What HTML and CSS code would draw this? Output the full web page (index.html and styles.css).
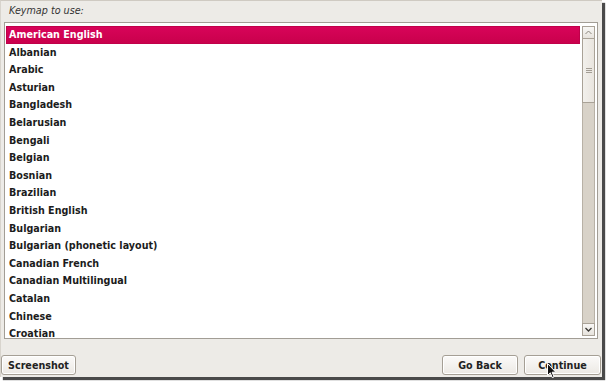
FILE: index.html
```html
<!DOCTYPE html>
<html>
<head>
<meta charset="utf-8">
<link rel="stylesheet" href="styles.css">
</head>
<body>
<div class="window">
  <div class="label">Keymap to use:</div>
  <div class="listbox">
    <ul class="items">
      <li class="sel">American English</li>
      <li>Albanian</li>
      <li>Arabic</li>
      <li>Asturian</li>
      <li>Bangladesh</li>
      <li>Belarusian</li>
      <li>Bengali</li>
      <li>Belgian</li>
      <li>Bosnian</li>
      <li>Brazilian</li>
      <li>British English</li>
      <li>Bulgarian</li>
      <li>Bulgarian (phonetic layout)</li>
      <li>Canadian French</li>
      <li>Canadian Multilingual</li>
      <li>Catalan</li>
      <li>Chinese</li>
      <li>Croatian</li>
    </ul>
    <div class="scrollbar">
      <div class="sb-btn">
        <svg width="7" height="5" viewBox="0 0 7 5"><path d="M0.5 4 L3.5 1 L6.5 4" fill="none" stroke="#8a857d" stroke-width="1"/></svg>
      </div>
      <div class="thumb"><span class="grip"></span></div>
      <div class="trough"></div>
      <div class="sb-btn">
        <svg width="7" height="5" viewBox="0 0 7 5"><path d="M0.5 1 L3.5 4 L6.5 1" fill="none" stroke="#3a3733" stroke-width="1.3"/></svg>
      </div>
    </div>
  </div>
  <div class="buttons">
    <button class="btn btn-shot">Screenshot</button>
    <div class="right">
      <button class="btn btn-back">Go Back</button>
      <button class="btn btn-cont">Continue
        <svg class="cursor" width="10" height="16" viewBox="0 0 10 16"><path d="M0.5 0.5 L0.5 12.5 L3.3 9.8 L5.3 14.6 L7 13.9 L5.1 9.2 L8.8 9.2 Z" fill="#111" stroke="#fff" stroke-width="1"/></svg>
      </button>
    </div>
  </div>
</div>
</body>
</html>
```
FILE: styles.css
```css
html, body {
  margin: 0;
  padding: 0;
  background: #ffffff;
}
body {
  width: 608px;
  height: 384px;
  overflow: hidden;
  font-family: "DejaVu Sans", sans-serif;
}
.window {
  width: 602px;
  height: 377px;
  box-sizing: border-box;
  background: #edebe7;
  border-top: 1px solid #cfcac2;
  border-left: 1px solid #d8d4cd;
  box-shadow: 3px 3px 1px 0 #4a4a4a;
  display: flex;
  flex-direction: column;
}
.label {
  font-style: italic;
  font-size: 9.6px;
  line-height: 12px;
  color: #333;
  padding: 4px 0 0 8px;
  height: 18px;
  box-sizing: border-box;
}
.listbox {
  margin: 3px 0 0 3px;
  width: 594px;
  height: 317px;
  box-sizing: border-box;
  border: 1px solid #a29d95;
  background: #fff;
  display: flex;
}
.items {
  list-style: none;
  margin: 0;
  padding: 3px 0 0 1px;
  flex: 1;
  overflow: hidden;
}
.items li {
  height: 17.6px;
  line-height: 17.6px;
  padding-left: 3px;
  font-size: 9.6px;
  font-weight: bold;
  color: #1c1c1c;
  white-space: nowrap;
}
.items li.sel {
  background: linear-gradient(#d9045a, #c8004b);
  color: #fff;
  box-shadow: inset 0 0 0 1px #c0004a;
}
.scrollbar {
  width: 13px;
  margin: 3px 2px 2px 2px;
  display: flex;
  flex-direction: column;
  background: #d8d2c8;
  border: 1px solid #b8b1a6;
  box-sizing: border-box;
}
.sb-btn {
  height: 11px;
  flex: none;
  background: linear-gradient(#f8f7f5, #e7e3dd);
  border: 1px solid #a9a297;
  margin: -1px;
  display: flex;
  align-items: center;
  justify-content: center;
}
.thumb {
  height: 63px;
  flex: none;
  background: linear-gradient(90deg, #f2f0ec, #e9e5df);
  border: 1px solid #a9a297;
  margin: 0 -1px;
  display: flex;
  align-items: center;
  justify-content: center;
}
.grip {
  width: 6px;
  height: 5px;
  border-top: 1px solid #a39d94;
  border-bottom: 1px solid #a39d94;
  box-sizing: border-box;
  position: relative;
}
.grip::after {
  content: "";
  position: absolute;
  left: 0;
  right: 0;
  top: 1px;
  border-top: 1px solid #a39d94;
}
.trough {
  flex: 1;
}
.buttons {
  display: flex;
  justify-content: space-between;
  padding: 16px 1px 0 0;
}
.right {
  display: flex;
  gap: 6px;
}
.btn {
  font-family: "DejaVu Sans", sans-serif;
  font-size: 9.6px;
  font-weight: bold;
  color: #222;
  height: 20px;
  padding: 0;
  border: 1px solid #a59f95;
  border-radius: 3px;
  background: linear-gradient(#fbfaf9, #ece9e4);
  box-shadow: inset 0 0 0 1px #fff;
  position: relative;
}
.btn-shot { width: 75px; }
.btn-back { width: 76px; }
.btn-cont { width: 77px; }
.cursor {
  position: absolute;
  left: 22px;
  top: 7px;
}
```
